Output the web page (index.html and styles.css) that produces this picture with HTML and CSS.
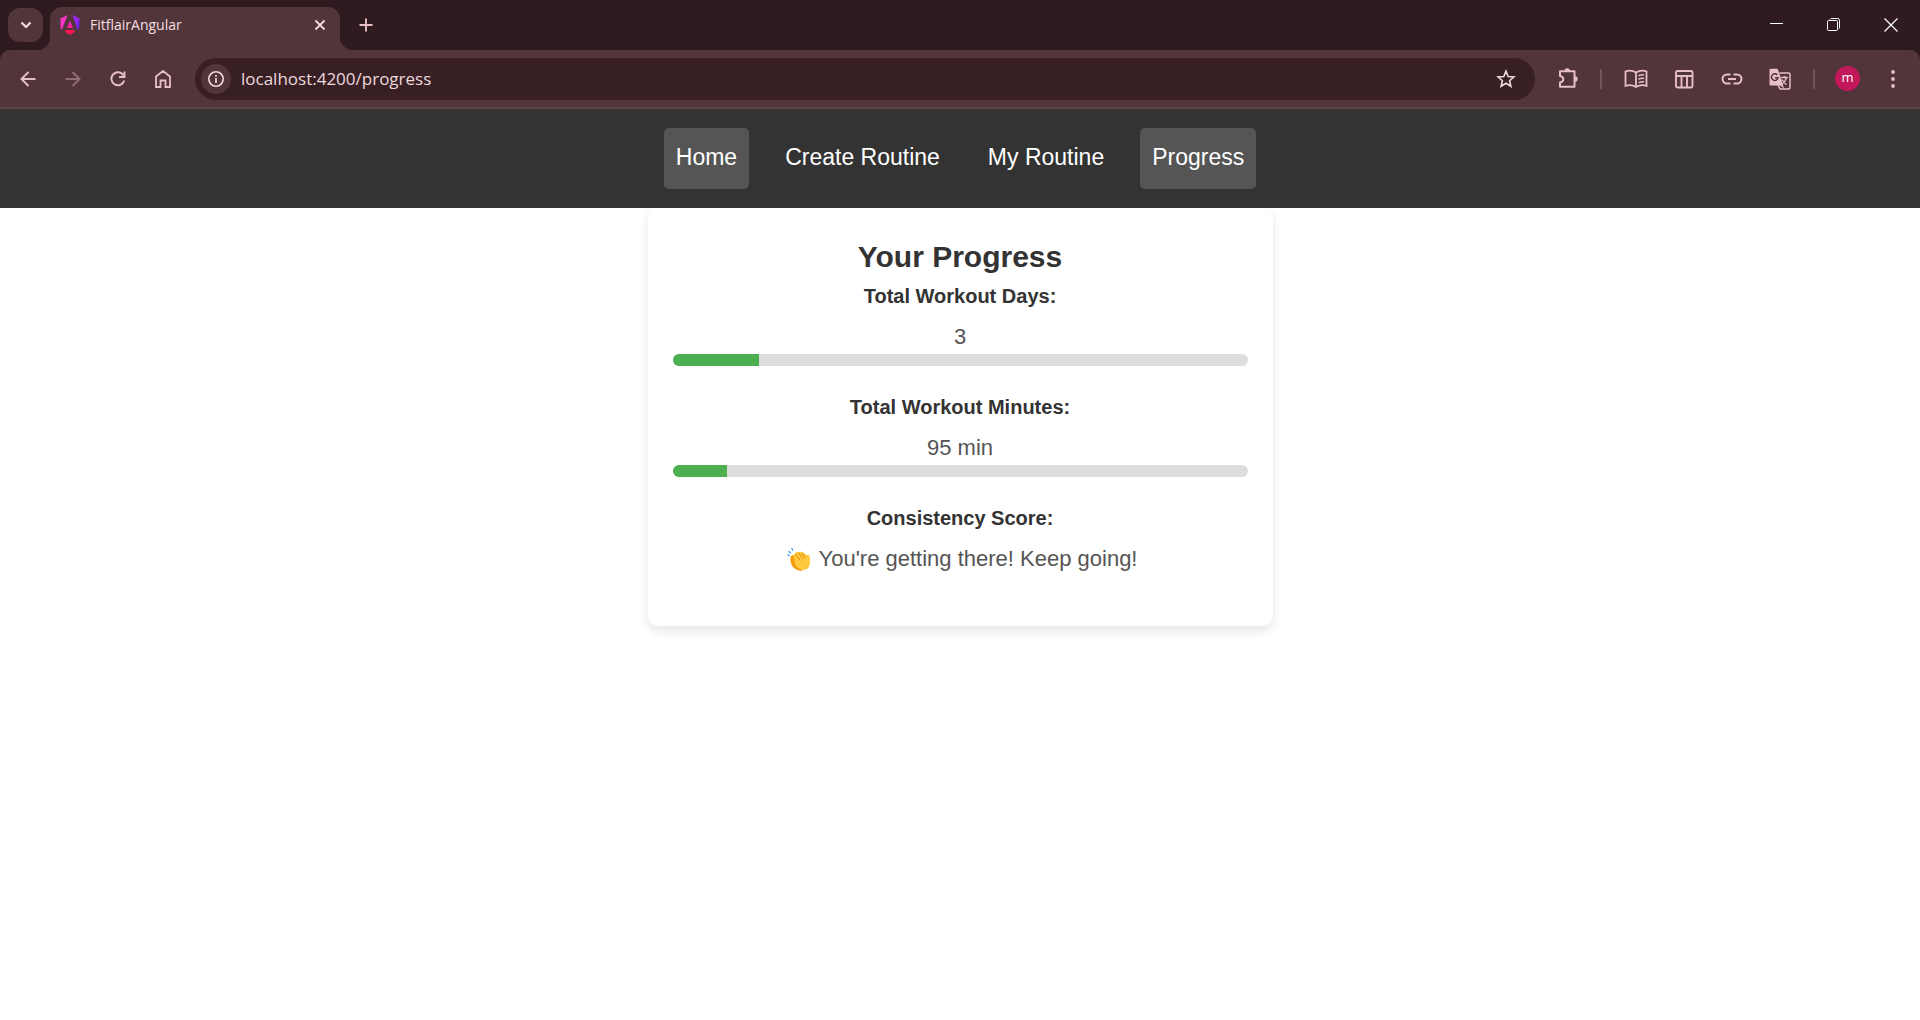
FILE: index.html
```html
<!DOCTYPE html>
<html lang="en">
<head>
<meta charset="utf-8">
<title>FitflairAngular</title>
<link rel="stylesheet" href="styles.css">
</head>
<body>
<header class="browser">
  <div class="tab-strip">
    <button class="tab-search" aria-label="Search tabs"><svg width="12" height="12" viewBox="0 0 12 12"><path d="M1.500 3.500 6 8l4.500-4.500" fill="none" stroke="currentColor" stroke-width="2.200"/></svg></button>
    <div class="tab">
      <svg class="favicon" width="20" height="20" viewBox="0 0 20 20">
        <defs><linearGradient id="ngr" x1="0" y1="0" x2="1" y2="1"><stop offset="0" stop-color="#b32bf5"/><stop offset="1" stop-color="#6a1cff"/></linearGradient>
        <linearGradient id="ngb" x1="0" y1="0" x2="0" y2="1"><stop offset="0" stop-color="#e62ad0"/><stop offset="1" stop-color="#ff1c8a"/></linearGradient></defs>
        <path d="M.5 3.500 7.500 0 2 14.500.5 13.500z" fill="#f733c8"/>
        <path d="M12.500 0l7 3.500-.5 10-1.500 1z" fill="url(#ngr)"/>
        <path d="M10 5.500 13.200 13H6.800z" fill="url(#ngb)"/>
        <path d="M5.800 15h8.400l.8 1.700-5 3.300-5-3.300z" fill="#ff1350"/>
      </svg>
      <span class="tab-title">FitflairAngular</span>
      <button class="tab-close" aria-label="Close tab"><svg width="12" height="12" viewBox="0 0 12 12"><path d="M1.500 1.500l9 9m0-9-9 9" stroke="currentColor" stroke-width="1.800"/></svg></button>
    </div>
    <button class="new-tab" aria-label="New tab"><svg width="14" height="14" viewBox="0 0 14 14"><path d="M7 .5v13M.5 7h13" stroke="currentColor" stroke-width="1.900"/></svg></button>
    <div class="window-controls">
      <button aria-label="Minimize"><svg width="14" height="14" viewBox="0 0 14 14"><path d="M0 5.500h13" stroke="currentColor"/></svg></button>
      <button aria-label="Restore"><svg width="14" height="14" viewBox="0 0 14 14" fill="none" stroke="currentColor"><rect x=".5" y="2.500" width="10" height="10" rx="1"/><path d="M3 1.500A1.500 1.500 0 0 1 4.500.5H10.500A2 2 0 0 1 12.500 2.500v7a1.500 1.500 0 0 1-1 1.500"/></svg></button>
      <button aria-label="Close"><svg width="14" height="14" viewBox="0 0 14 14"><path d="M.5.5l13 13m0-13-13 13" stroke="currentColor" stroke-width="1.200"/></svg></button>
    </div>
  </div>
  <div class="toolbar">
    <button class="tool" aria-label="Back"><svg width="16" height="16" viewBox="0 0 16 16"><path d="M15.500 8H1.500M8.500 1l-7 7 7 7" fill="none" stroke="currentColor" stroke-width="1.900"/></svg></button>
    <button class="tool" aria-label="Forward" disabled><svg width="16" height="16" viewBox="0 0 16 16"><path d="M.5 8h14M7.500 1l7 7-7 7" fill="none" stroke="currentColor" stroke-width="1.900"/></svg></button>
    <button class="tool" aria-label="Reload"><svg width="16" height="16" viewBox="0 0 16 16" fill="none" stroke="currentColor" stroke-width="1.900"><path d="M13.500 4.400A6.500 6.500 0 1 0 14.200 9.500M14.500 .5v5.500H9"/></svg></button>
    <button class="tool" aria-label="Home"><svg width="16" height="18" viewBox="0 0 16 18"><path d="M1 6.500 8 1l7 5.500V17h-4.500v-6.500h-5V17H1z" fill="none" stroke="currentColor" stroke-width="1.800"/></svg></button>
    <div class="omnibox">
      <button class="site-info" aria-label="View site information"><svg width="16" height="16" viewBox="0 0 16 16"><circle cx="8" cy="8" r="7.200" fill="none" stroke="currentColor" stroke-width="1.600"/><path d="M8 7v5M8 4v1.700" stroke="currentColor" stroke-width="1.700"/></svg></button>
      <input class="url" type="text" aria-label="Address" value="localhost:4200/progress">
      <button class="bookmark" aria-label="Bookmark this tab"><svg width="20" height="20" viewBox="0 0 20 20"><path d="M10 2.200l2.200 5.300 5.700.5-4.300 3.700 1.300 5.600L10 14.300l-4.900 3 1.300-5.600L2.100 8l5.700-.5z" fill="none" stroke="currentColor" stroke-width="1.600"/></svg></button>
    </div>
    <button class="tool extensions" aria-label="Extensions"><svg width="21" height="21" viewBox="0 0 21 21"><path d="M2 3.300h14.500v15.500H2v-4.300q3.300-.5 3.300-3.200T2 8z" fill="none" stroke="currentColor" stroke-width="2" stroke-linejoin="round"/><path d="M6.500 3a2.700 2.700 0 0 1 5.400 0zM17 8.300a2.700 2.700 0 0 1 0 5.400z" fill="currentColor"/></svg></button>
    <span class="divider"></span>
    <button class="tool wide" aria-label="Reading list"><svg width="24" height="20" viewBox="0 0 24 20" fill="none" stroke="currentColor" stroke-width="1.800"><path d="M12 3.500Q7 .5 1.500 2.500v14.500q5.500-2 10.500 1 5-3 10.500-1V2.500Q17 .5 12 3.500V18"/><path d="M14.500 6.800q3-1.300 5.500-.8m-5.500 4.200q3-1.300 5.500-.8m-5.500 4.200q3-1.300 5.500-.8" stroke-width="1.500"/></svg></button>
    <button class="tool wide" aria-label="Customize layout"><svg width="20" height="20" viewBox="0 0 20 20" fill="none" stroke="currentColor" stroke-width="1.900"><rect x="2" y="2" width="16.500" height="16.500" rx="1.500"/><path d="M2 7h16.500M7.500 7v11.500M13 7v11.500"/></svg></button>
    <button class="tool wide" aria-label="Copy link"><svg width="22" height="12" viewBox="0 0 22 12" fill="none" stroke="currentColor" stroke-width="2"><path d="M9.500 1.500H6a4.500 4.500 0 0 0 0 9h3.500m3-9H16a4.500 4.500 0 0 1 0 9h-3.500M7 6h8"/></svg></button>
    <button class="tool wide" aria-label="Translate"><svg width="22" height="22" viewBox="0 0 22 22"><path d="M10.500 5H19.500a1.500 1.500 0 0 1 1.500 1.500v13a1.500 1.500 0 0 1-1.500 1.500H11l-2-4" fill="none" stroke="currentColor" stroke-width="1.500"/><path d="M1.800.8H8.500l1.500 3.500 5 16-4-2.800H1.800A1.300 1.300 0 0 1 .5 16.200V2A1.300 1.300 0 0 1 1.800.8z" fill="currentColor"/><path d="M8.300 7A3.300 3.300 0 1 0 9 9.800H6" fill="none" stroke="#51353a" stroke-width="1.500"/><path d="M12 9.500h7M15.500 8v1.500m2 0q-1 4-4.500 6.500m0-4.500q1.500 3 4.500 5" fill="none" stroke="currentColor" stroke-width="1.400"/></svg></button>
    <span class="divider"></span>
    <button class="tool" aria-label="Profile"><span class="avatar">m</span></button>
    <button class="tool" aria-label="Menu"><svg width="4" height="18" viewBox="0 0 4 18" fill="currentColor"><circle cx="2" cy="2" r="1.900"/><circle cx="2" cy="9" r="1.900"/><circle cx="2" cy="16" r="1.900"/></svg></button>
  </div>
</header>
<nav class="site-nav">
  <a class="active" href="#home">Home</a>
  <a href="#create">Create Routine</a>
  <a href="#routine">My Routine</a>
  <a class="active" href="#progress">Progress</a>
</nav>
<main class="card">
  <h1>Your Progress</h1>
  <section class="stat">
    <h2>Total Workout Days:</h2>
    <p>3</p>
    <div class="bar"><div class="fill" style="width:15%"></div></div>
  </section>
  <section class="stat">
    <h2>Total Workout Minutes:</h2>
    <p>95 min</p>
    <div class="bar"><div class="fill" style="width:9.5%"></div></div>
  </section>
  <section class="stat">
    <h2>Consistency Score:</h2>
    <p class="message"><svg width="24" height="24" viewBox="0 0 24 24" role="img" aria-label="Clapping hands">
      <path d="M4 9.500q1-2 2.500-1.500L9 5.500q1.500-1.500 3-.2 1.700-1.500 3 .3 2-1 2.500 1.200 1.800-.3 2.100 1.500 2.500-1.500 3 1.200.4 2 .4 5-.1 8-6 8.300-7 1-9.500-4.500Q3.500 14.500 4 9.500z" fill="#ffc83d"/>
      <path d="M4 9q-1.500 4 .5 8.500T12 23.500q2.500.5 4 0Q7 20.500 7.500 13.500L6 8z" fill="#f59a0b"/>
      <path d="M8.500 7.500l5 6M11.500 5.800l4.500 6M15 6l3.300 5" stroke="#d67d00" stroke-width=".9" fill="none"/>
      <path d="M1 8l1.200.6M2 4.500l1.500 1.500M5 1.500l.6 1.700" stroke="#4da6f5" stroke-width="1.400" stroke-linecap="round"/>
    </svg><span>You're getting there! Keep going!</span></p>
  </section>
</main>
</body>
</html>
```
FILE: styles.css
```css
* { box-sizing: border-box; }
body { margin: 0; min-height: 100vh; background: #fff; font-family: Arial, "Liberation Sans", sans-serif; }
h1, h2, p { margin: 0; }
button { border: 0; padding: 0; margin: 0; background: none; color: inherit; font: inherit; display: flex; align-items: center; justify-content: center; }
svg { display: block; flex: none; }

/* Browser window */
.browser { background: #2f1a1f; color: #e8bfc8; font-family: "Segoe UI", "Open Sans", sans-serif; }
.tab-strip { display: flex; height: 50px; padding: 0 1px 0 8px; }
.tab-search { width: 35px; height: 34px; margin-top: 8px; border-radius: 12px; background: #51353a; color: #f3dde1; }
.tab { position: relative; display: flex; align-items: center; width: 290px; height: 43px; margin: 7px 0 0 7px; padding: 0 14px 7px 10px; border-radius: 12px 12px 0 0; background: #51353a; color: #f3dde1; }
.tab::before, .tab::after { content: ""; position: absolute; bottom: 0; width: 14px; height: 14px; }
.tab::before { right: 100%; background: radial-gradient(circle at 0 0, transparent 14px, #51353a 15px); }
.tab::after { left: 100%; background: radial-gradient(circle at 100% 0, transparent 14px, #51353a 15px); }
.tab-title { flex: 1; margin-left: 10px; font-size: 14px; line-height: 20px; }
.new-tab { width: 36px; height: 36px; margin: 7px 0 0 8px; }
.window-controls { display: flex; margin-left: auto; color: #fff; }
.window-controls button { width: 57px; height: 49px; }
.toolbar { display: flex; align-items: center; height: 59px; padding: 0 5px; border-bottom: 2px solid #5c4548; border-radius: 10px 10px 0 0; background: #51353a; }
.tool { width: 45px; height: 42px; flex: none; }
.tool:disabled { color: #8f6d73; }
.wide { width: 48px; }
.extensions { margin-left: 11px; }
.divider { width: 2px; height: 20px; margin: 0 10px 0 9px; background: #74525a; }
.omnibox { display: flex; flex: 1; align-items: center; height: 42px; margin-left: 10px; padding: 0 6px; border-radius: 21px; background: #381f24; color: #f0dadd; }
.site-info { width: 30px; height: 30px; border-radius: 50%; background: #51353a; }
.url { flex: 1; margin-left: 10px; padding: 0; border: 0; outline: 0; background: none; color: #ecd9dc; font-family: inherit; font-size: 17px; line-height: 24px; }
.bookmark { width: 47px; height: 42px; }
.avatar { width: 25px; height: 25px; border-radius: 50%; background: #c2185b; color: #fff; font-size: 13px; line-height: 23px; text-align: center; }

/* Site navigation */
.site-nav { position: relative; display: flex; justify-content: center; gap: 24px; padding: 19px; background: #333; }
.site-nav a { padding: 12px 12px 15px; border-radius: 5px; color: #fff; font-size: 23px; line-height: 34px; text-decoration: none; }
.site-nav .active { background: #555; }

/* Progress card */
.card { max-width: 625px; margin: 0 auto; padding: 26px 25px 25px; border-radius: 10px; background: #fff; box-shadow: 0 5px 12px rgba(0, 0, 0, .1); text-align: center; color: #333; }
h1 { font-size: 30px; line-height: 46px; }
.stat { margin-bottom: 25px; }
h2 { font-size: 20px; line-height: 32px; }
.stat p { margin-top: 8px; color: #555; font-size: 22px; line-height: 34px; }
.stat .message { display: flex; justify-content: center; align-items: center; gap: 8px; padding-left: 4px; }
.bar { height: 12px; border-radius: 6px; background: #ddd; overflow: hidden; }
.fill { height: 100%; background: #4caf50; }
```
